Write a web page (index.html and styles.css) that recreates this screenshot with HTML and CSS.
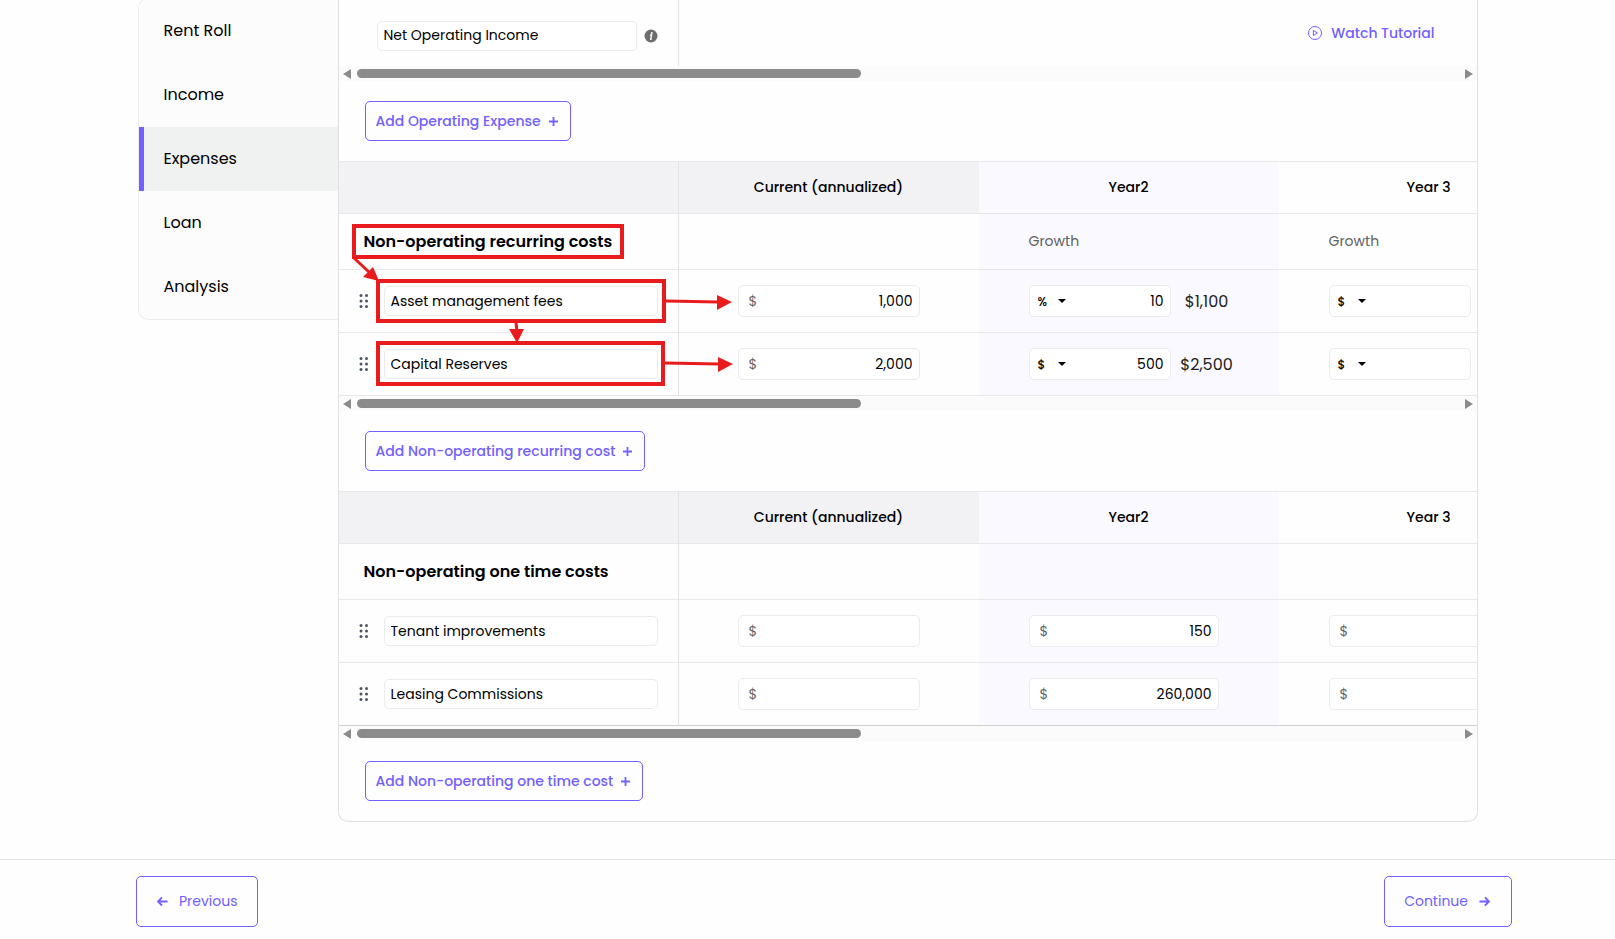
FILE: index.html
```html
<!DOCTYPE html>
<html lang="en">
<head>
  <meta charset="UTF-8">
  <title>Expenses</title>
  <link rel="stylesheet" href="styles.css">
</head>
<body>
  <div class="container">
    <nav class="sidebar">
      <a href="#">Rent Roll</a>
      <a href="#">Income</a>
      <a href="#" class="active">Expenses</a>
      <a href="#">Loan</a>
      <a href="#">Analysis</a>
    </nav>

    <main class="panel">
      <!-- Operating expenses -->
      <section class="section">
        <div class="total-row">
          <div class="total-name">
            <input type="text" class="name-input" value="Net Operating Income" aria-label="Total name">
            <svg class="info" viewBox="0 0 14 14"><circle cx="7" cy="7" r="6.5" fill="#6e6e6e"/><circle cx="7.8" cy="3.9" r="1" fill="#fff"/><path d="M6 6h1.6L6.7 10.2h1" fill="none" stroke="#fff" stroke-width="1.4"/></svg>
          </div>
          <a href="#" class="tutorial">
            <svg viewBox="0 0 16 16" fill="none" stroke="currentColor"><circle cx="8" cy="8" r="6.5"/><path d="M6.4 5.4v5.2L10.4 8z"/></svg>
            Watch Tutorial
          </a>
        </div>
        <div class="scrollbar"><span class="arrow left"></span><span class="thumb"></span><span class="arrow right"></span></div>
        <div class="actions">
          <button class="add-btn">Add Operating Expense <svg viewBox="0 0 10 10"><path d="M5 0v10M0 5h10"/></svg></button>
        </div>
      </section>

      <!-- Non-operating recurring costs -->
      <section class="section bordered">
        <div class="table-wrap">
          <table class="costs">
            <thead>
              <tr><th class="col-name"></th><th class="col-year">Current (annualized)</th><th class="col-year tint">Year2</th><th class="col-year plain">Year 3</th></tr>
            </thead>
            <tbody>
              <tr class="title-row">
                <td><h3>Non-operating recurring costs</h3></td><td></td><td class="tint year">Growth</td><td class="year">Growth</td>
              </tr>
              <tr>
                <td><div class="name-cell">
                  <svg class="drag" viewBox="0 0 10 16"><use href="#dots"/></svg>
                  <input type="text" class="name-input" value="Asset management fees" aria-label="Cost name">
                </div></td>
                <td class="current"><label class="money"><span>$</span><input type="text" value="1,000" aria-label="Current amount"></label></td>
                <td class="tint year"><div class="growth">
                  <div class="unit-box"><select aria-label="Unit"><option>%</option><option>$</option></select><input type="text" value="10" aria-label="Growth"></div>
                  <span class="amount">$1,100</span>
                </div></td>
                <td class="year"><div class="growth">
                  <div class="unit-box"><select aria-label="Unit"><option>$</option><option>%</option></select><input type="text" aria-label="Growth"></div>
                </div></td>
              </tr>
              <tr>
                <td><div class="name-cell">
                  <svg class="drag" viewBox="0 0 10 16"><use href="#dots"/></svg>
                  <input type="text" class="name-input" value="Capital Reserves" aria-label="Cost name">
                </div></td>
                <td class="current"><label class="money"><span>$</span><input type="text" value="2,000" aria-label="Current amount"></label></td>
                <td class="tint year"><div class="growth">
                  <div class="unit-box"><select aria-label="Unit"><option>$</option><option>%</option></select><input type="text" value="500" aria-label="Growth"></div>
                  <span class="amount">$2,500</span>
                </div></td>
                <td class="year"><div class="growth">
                  <div class="unit-box"><select aria-label="Unit"><option>$</option><option>%</option></select><input type="text" aria-label="Growth"></div>
                </div></td>
              </tr>
            </tbody>
          </table>
        </div>
        <div class="scrollbar"><span class="arrow left"></span><span class="thumb"></span><span class="arrow right"></span></div>
        <div class="actions">
          <button class="add-btn">Add Non-operating recurring cost <svg viewBox="0 0 10 10"><path d="M5 0v10M0 5h10"/></svg></button>
        </div>

        <!-- Walkthrough markers -->
        <svg class="markers" viewBox="0 0 400 240">
          <g fill="none" stroke="#e81c1c" stroke-width="4">
            <rect x="15" y="65" width="268" height="31"/>
            <rect x="39" y="120" width="286" height="40"/>
            <rect x="39" y="182" width="285" height="41"/>
          </g>
          <g stroke="#e81c1c" stroke-width="3">
            <path d="M15 97L31 112M327 140L379 141M177 162L178 170M325 202L380 203"/>
          </g>
          <g fill="#e81c1c">
            <path d="M24 116L34 106L40 120z"/>
            <path d="M378 134V149L393 141z"/>
            <path d="M170 168H185L178 182z"/>
            <path d="M379 196V211L394 203z"/>
          </g>
        </svg>
      </section>

      <!-- Non-operating one time costs -->
      <section class="section bordered one-time">
        <div class="table-wrap">
          <table class="costs">
            <thead>
              <tr><th class="col-name"></th><th class="col-year">Current (annualized)</th><th class="col-year tint">Year2</th><th class="col-year plain">Year 3</th></tr>
            </thead>
            <tbody>
              <tr class="title-row">
                <td><h3>Non-operating one time costs</h3></td><td></td><td class="tint"></td><td></td>
              </tr>
              <tr>
                <td><div class="name-cell">
                  <svg class="drag" viewBox="0 0 10 16"><use href="#dots"/></svg>
                  <input type="text" class="name-input" value="Tenant improvements" aria-label="Cost name">
                </div></td>
                <td class="current"><label class="money"><span>$</span><input type="text" aria-label="Current amount"></label></td>
                <td class="tint year"><label class="money wide"><span>$</span><input type="text" value="150" aria-label="Year 2 amount"></label></td>
                <td class="year"><label class="money wide"><span>$</span><input type="text" aria-label="Year 3 amount"></label></td>
              </tr>
              <tr>
                <td><div class="name-cell">
                  <svg class="drag" viewBox="0 0 10 16"><use href="#dots"/></svg>
                  <input type="text" class="name-input" value="Leasing Commissions" aria-label="Cost name">
                </div></td>
                <td class="current"><label class="money"><span>$</span><input type="text" aria-label="Current amount"></label></td>
                <td class="tint year"><label class="money wide"><span>$</span><input type="text" value="260,000" aria-label="Year 2 amount"></label></td>
                <td class="year"><label class="money wide"><span>$</span><input type="text" aria-label="Year 3 amount"></label></td>
              </tr>
            </tbody>
          </table>
        </div>
        <div class="scrollbar"><span class="arrow left"></span><span class="thumb"></span><span class="arrow right"></span></div>
        <div class="actions">
          <button class="add-btn">Add Non-operating one time cost <svg viewBox="0 0 10 10"><path d="M5 0v10M0 5h10"/></svg></button>
        </div>
      </section>
    </main>
  </div>

  <footer class="footer">
    <button class="nav-btn"><svg viewBox="0 0 12 12"><path d="M11.5 6H1.5M5.5 1.5L1.2 6l4.3 4.5"/></svg>Previous</button>
    <button class="nav-btn next">Continue<svg viewBox="0 0 12 12"><path d="M.5 6h10M6.5 1.5L10.8 6l-4.3 4.5"/></svg></button>
  </footer>

  <svg width="0" height="0" class="defs">
    <symbol id="dots" viewBox="0 0 10 16">
      <g fill="#4b5563">
        <circle cx="2" cy="2.5" r="1.5"/><circle cx="7.5" cy="2.5" r="1.5"/>
        <circle cx="2" cy="8" r="1.5"/><circle cx="7.5" cy="8" r="1.5"/>
        <circle cx="2" cy="13.5" r="1.5"/><circle cx="7.5" cy="13.5" r="1.5"/>
      </g>
    </symbol>
  </svg>
</body>
</html>
```
FILE: styles.css
```css
* { box-sizing: border-box; }
body { font-family: Poppins, Inter, sans-serif; font-size: 14px; background: #fefefe; color: #000; margin: 0; }
a { text-decoration: none; color: inherit; }
input, select, button { font: inherit; color: inherit; }
.defs { position: absolute; }

.container { display: flex; align-items: flex-start; max-width: 1340px; margin: 0 auto; }

.sidebar { width: 200px; flex-shrink: 0; margin-top: -2px; background: #fcfcfc; border: 1px solid #ececec; border-right: none; border-radius: 10px 0 0 10px; }
.sidebar a { display: flex; align-items: center; height: 64px; padding: 0 0 2px 25px; font-size: 16px; }
.sidebar a.active { background: #f0f2f1; border-left: 5px solid #7260ff; padding-left: 20px; }

.panel { flex: 1; min-width: 0; border: 1px solid #e0e0e0; border-top: none; border-radius: 0 0 10px 10px; }
.section { position: relative; }
.section.bordered { border-top: 1px solid #e8e8ea; }

.total-row { display: flex; height: 66px; }
.total-name { display: flex; align-items: center; gap: 7px; width: 340px; padding: 6px 0 0 38px; border-right: 1px solid #e2e2e5; }
.total-name .name-input { width: 260px; padding-bottom: 2px; }
.info { width: 14px; height: 14px; }
.tutorial { display: flex; align-items: center; gap: 8px; margin-left: auto; padding-right: 42px; color: #7260ff; font-weight: 500; }
.tutorial svg { width: 16px; height: 16px; }

.name-input { height: 30px; padding: 0 6px; border: 1px solid #ebebed; border-radius: 5px; background: #fff; font-size: 14px; }

.table-wrap { overflow: hidden; }
.costs { width: 1240px; table-layout: fixed; border-collapse: separate; border-spacing: 0; }
.costs th, .costs td { padding: 0; border-bottom: 1px solid #e8e8ea; text-align: left; }
.costs th { height: 52px; background: #f2f2f4; font-weight: 500; text-align: center; }
.costs td { height: 63px; }
.costs .title-row td { height: 56px; }
.costs tr > :first-child { border-right: 1px solid #e2e2e5; }
.costs .tint { background: #faf9ff; }
.costs .plain { background: #fefefe; }
.col-name { width: 340px; }
.col-year { width: 300px; }
.costs .current { padding-left: 59px; }
.costs .year { padding-left: 50px; }
.title-row .year { color: #5f5f5f; }
.one-time tr:last-child td { border-bottom-color: #d0d0d3; }
.one-time th { border-bottom-color: #e8e8ea; }
h3 { margin: 0; padding-left: 25px; font-size: 16px; font-weight: 600; }

.name-cell { display: flex; align-items: center; gap: 15px; padding-left: 20px; }
.name-cell .name-input { width: 274px; }
.drag { width: 10px; height: 16px; }

.money, .unit-box { display: flex; align-items: center; height: 32px; border: 1px solid #ebebed; border-radius: 5px; background: #fff; }
.money { width: 182px; padding: 0 6px 0 10px; }
.money.wide { width: 190px; }
.money span { color: #666; }
.money input, .unit-box input { flex: 1; min-width: 0; padding: 0; border: none; outline: none; background: none; text-align: right; }
.growth { display: flex; align-items: center; }
.unit-box { width: 142px; padding: 0 6px 0 8px; }
.unit-box select { width: 28px; padding: 0; border: none; appearance: none; font-size: 12px; font-weight: 500;
  background: url("data:image/svg+xml,%3Csvg xmlns='http://www.w3.org/2000/svg' width='8' height='4'%3E%3Cpath d='M0 0h8L4 4z'/%3E%3C/svg%3E") no-repeat right center; }
.amount { width: 72px; text-align: center; font-size: 16px; color: #222; }

.scrollbar { display: flex; align-items: center; height: 15px; padding: 0 4px; background: #fbfbfb; }
.scrollbar .thumb { width: 504px; height: 9px; margin-left: 6px; border-radius: 5px; background: #8b8b8b; }
.arrow { border: 4px solid transparent; border-width: 5px 0; }
.arrow.left { border-right: 8px solid #8b8b8b; }
.arrow.right { border-left: 8px solid #8b8b8b; margin-left: auto; }

.actions { padding: 20px 26px; }
.add-btn { display: flex; align-items: center; gap: 8px; height: 40px; padding: 0 12px 0 10px; border: 1px solid #7260ff; border-radius: 5px; background: none; color: #7260ff; font-weight: 500; cursor: pointer; }
.add-btn svg { width: 9px; height: 9px; stroke: currentColor; stroke-width: 2; }

.markers { position: absolute; left: 0; top: -1px; width: 400px; height: 240px; pointer-events: none; }

.footer { display: flex; justify-content: space-between; margin-top: 37px; padding: 16px 103px 12px 136px; border-top: 1px solid #e2e2e2; }
.nav-btn { display: flex; align-items: center; gap: 11px; height: 51px; padding: 0 19px 0 20px; border: 1px solid #7260ff; border-radius: 5px; background: none; color: #7260ff; cursor: pointer; }
.nav-btn.next { padding: 0 21px 0 19px; }
.nav-btn svg { width: 11px; height: 11px; fill: none; stroke: currentColor; stroke-width: 2; }
```
